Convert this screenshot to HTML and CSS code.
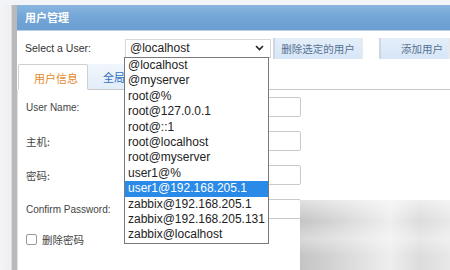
FILE: index.html
```html
<!DOCTYPE html>
<html>
<head>
<meta charset="utf-8">
<link rel="stylesheet" href="styles.css">
</head>
<body>
<div class="page">
  <div class="side"></div>
  <div class="window">
    <div class="titlebar">用户管理</div>
    <div class="content">
      <div class="toprow">
        <span class="lbl-select">Select a User:</span>
        <div class="select"><span>@localhost</span>
          <svg class="chev" width="9" height="6" viewBox="0 0 9 6"><path d="M1 1 L4.5 4.5 L8 1" fill="none" stroke="#222" stroke-width="1.6"/></svg>
        </div>
        <div class="btn btn-del">删除选定的用户</div>
        <div class="btn btn-add">添加用户</div>
      </div>
      <div class="tabs">
        <div class="tab active">用户信息</div>
        <div class="tab">全局权限</div>
        <div class="tabfill"></div>
      </div>
      <div class="panel">
        <div class="frow"><span class="flabel">User Name:</span><span class="input"></span></div>
        <div class="frow"><span class="flabel cjk">主机:</span><span class="input"></span></div>
        <div class="frow"><span class="flabel cjk">密码:</span><span class="input"></span></div>
        <div class="frow r4"><span class="flabel">Confirm Password:</span><span class="input"></span></div>
        <div class="checkrow"><span class="cbox"></span><span class="cjk">删除密码</span></div>
      </div>
    </div>
  </div>
</div>
<ul class="dropdown">
  <li>@localhost</li>
  <li>@myserver</li>
  <li>root@%</li>
  <li>root@127.0.0.1</li>
  <li>root@::1</li>
  <li>root@localhost</li>
  <li>root@myserver</li>
  <li>user1@%</li>
  <li class="sel">user1@192.168.205.1</li>
  <li>zabbix@192.168.205.1</li>
  <li>zabbix@192.168.205.131</li>
  <li>zabbix@localhost</li>
</ul>
<div class="watermark"></div>
</body>
</html>
```

FILE: styles.css
```css
html, body {
  margin: 0;
  padding: 0;
  width: 450px;
  height: 270px;
  overflow: hidden;
  background: #f3f4f7;
  font-family: "Liberation Sans", "Noto Sans CJK SC", sans-serif;
  color: #333;
}
.page {
  display: flex;
  height: 270px;
  padding-top: 5px;
  box-sizing: border-box;
}
.side {
  width: 12px;
  flex: none;
  background: linear-gradient(90deg, #f4f4f6, #eceef3);
}
.window {
  flex: 1;
  background: #fff;
  border-left: 5px solid #b9b9bb;
  box-shadow: -1px 0 0 #dcdcdc;
  display: flex;
  flex-direction: column;
}
.titlebar {
  height: 25px;
  line-height: 24px;
  padding-left: 8px;
  font-family: "Noto Sans CJK SC", sans-serif;
  font-size: 11px;
  font-weight: bold;
  color: #fff;
  background: linear-gradient(180deg, #8ab6e0 0%, #74a6d6 45%, #6b9fd2 100%);
  border-bottom: 1px solid #b8cfe6;
}
.content {
  flex: 1;
  display: flex;
  flex-direction: column;
}
.toprow {
  display: flex;
  align-items: center;
  height: 22px;
  margin-top: 6px;
}
.lbl-select {
  width: 108px;
  padding-left: 8px;
  box-sizing: border-box;
  font-size: 10.5px;
  color: #333;
}
.select {
  width: 146px;
  height: 19px;
  box-sizing: border-box;
  border: 1px solid #d8d8d8;
  border-bottom-color: #bbb;
  display: flex;
  align-items: center;
  justify-content: space-between;
  padding: 0 6px 0 4px;
  font-size: 12px;
  color: #222;
}
.btn {
  height: 21px;
  line-height: 21px;
  box-sizing: border-box;
  font-family: "Noto Sans CJK SC", sans-serif;
  font-size: 10.5px;
  color: #55708f;
  background: linear-gradient(180deg, #e4eefa, #d6e6f7);
  border-left: 2px solid #cfd6df;
  border-right: 2px solid #e6eaee;
}
.btn-del {
  margin-left: 2px;
  width: 90px;
  text-align: center;
}
.btn-add {
  margin-left: 16px;
  flex: 1;
  padding-left: 20px;
}
.tabs {
  display: flex;
  margin-top: 5px;
  height: 26px;
}
.tab {
  width: 70px;
  box-sizing: border-box;
  font-family: "Noto Sans CJK SC", sans-serif;
  font-size: 11px;
  line-height: 26px;
  color: #2f6fbf;
  padding-left: 15px;
  background: linear-gradient(180deg, #f0f6fc, #e2edf9);
  border-bottom: 1px solid #c8c8c8;
}
.tab.active {
  margin-left: 1px;
  background: #fff;
  color: #e4892a;
  border: 1px solid #cfcfcf;
  border-bottom: 1px solid #fff;
  border-radius: 2px 2px 0 0;
}
.tabfill {
  flex: 1;
  border-bottom: 1px solid #c8c8c8;
}
.panel {
  flex: 1;
  border-left: 1px solid #e2e2e2;
  padding-left: 8px;
  padding-top: 7px;
  display: flex;
  flex-direction: column;
}
.frow {
  display: flex;
  align-items: center;
  height: 20px;
  margin-bottom: 14px;
}
.frow.r4 {
  margin-bottom: 12px;
}
.flabel {
  width: 99px;
  font-size: 10px;
  color: #444;
}
.flabel.cjk, .cjk {
  font-family: "Noto Sans CJK SC", sans-serif;
  font-size: 10.5px;
  color: #444;
}
.input {
  width: 176px;
  height: 20px;
  box-sizing: border-box;
  border: 1px solid #c9c9c9;
  border-radius: 2px;
}
.checkrow {
  display: flex;
  align-items: center;
  gap: 5px;
  margin-top: 1px;
}
.cbox {
  width: 9px;
  height: 9px;
  border: 1px solid #999;
  border-radius: 2px;
  background: #fff;
}
.dropdown {
  position: absolute;
  left: 124px;
  top: 57px;
  width: 145px;
  margin: 0;
  padding: 0;
  list-style: none;
  background: #fff;
  border: 1px solid #7a7a7a;
  box-sizing: border-box;
  font-size: 12px;
  color: #222;
}
.dropdown li {
  height: 15.4px;
  line-height: 15.4px;
  padding-left: 3px;
  white-space: nowrap;
}
.dropdown li.sel {
  background: #2a8ae8;
  color: #fff;
}
.watermark {
  position: absolute;
  left: 300px;
  top: 200px;
  width: 150px;
  height: 70px;
  background:
    linear-gradient(180deg, rgba(255,255,255,0.5) 0%, rgba(255,255,255,0) 30%, rgba(255,255,255,0.35) 55%, rgba(255,255,255,0) 80%),
    linear-gradient(90deg, #c4c4c4 0%, #d2d2d2 20%, #e4e4e4 45%, #eeeeee 60%, #dcdcdc 80%, #e8e8e8 100%);
}
```
